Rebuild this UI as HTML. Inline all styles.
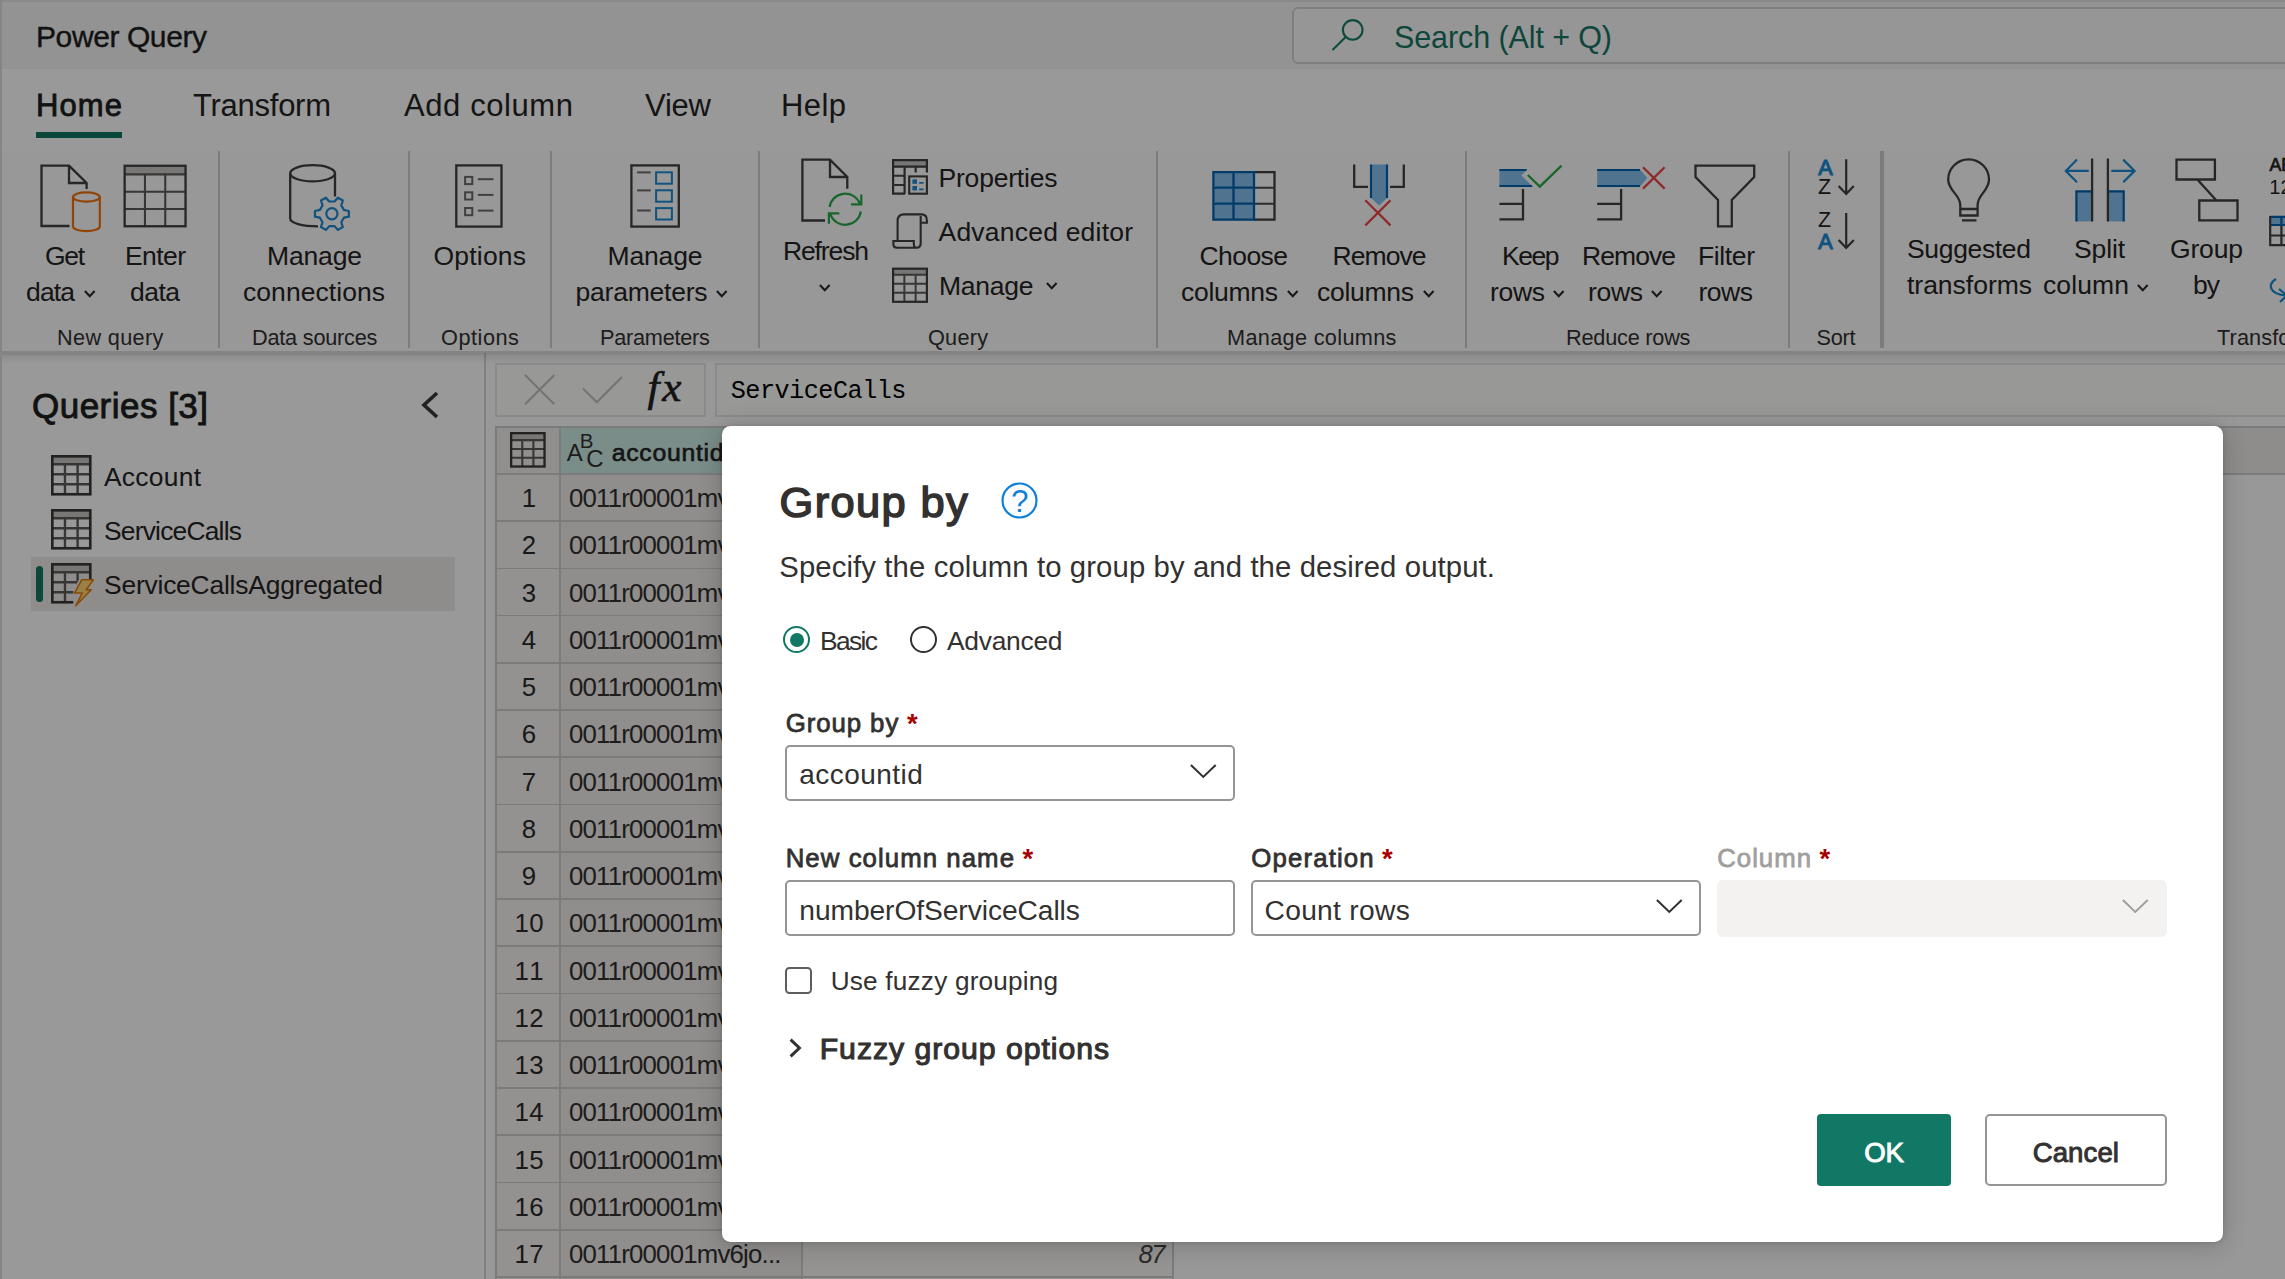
<!DOCTYPE html>
<html lang="en"><head><meta charset="utf-8"><title>Power Query - Group by</title>
<style>
html,body{margin:0;padding:0;}
body{width:2285px;height:1279px;overflow:hidden;position:relative;background:#fff;font-family:"Liberation Sans",sans-serif;color:#252423;}
.t{position:absolute;white-space:nowrap;line-height:1;display:block;}
.r{position:absolute;box-sizing:border-box;display:block;}
#app,#overlay{position:absolute;left:0;top:0;width:2285px;height:1279px;overflow:hidden;}
#overlay{background:rgba(0,0,0,0.4);}
#dlg{position:absolute;left:722px;top:426px;width:1501px;height:816px;background:#fff;border-radius:8.5px;box-shadow:0 3px 26px rgba(0,0,0,0.2),0 0 5px rgba(0,0,0,0.14);}
</style></head><body>

<div id="app">
<div class="r " style="left:0.0px;top:0.0px;width:2285.0px;height:69.0px;background:#f5f5f5;"></div>
<span class="t" style="letter-spacing:-0.405px;left:36.0px;top:21.65px;font-size:30.0px;color:#201f1e;-webkit-text-stroke:0.4px #201f1e;">Power Query</span>
<div class="r " style="left:1292.0px;top:6.5px;width:1108.0px;height:57.0px;background:#fbfbfb;border:2px solid #d4d4d4;border-radius:6px;"></div>
<svg class="r" style="left:1330.0px;top:17.0px;" width="38" height="38" viewBox="0 0 38 38" fill="none"><circle cx="22.7" cy="12.9" r="9.8" stroke="#1a7c69" stroke-width="2.1"/><path d="M15.6 20 L3 32.4" stroke="#1a7c69" stroke-width="2.1" stroke-linecap="round"/></svg>
<span class="t" style="letter-spacing:-0.100px;left:1394.0px;top:21.90px;font-size:30.5px;color:#167563;">Search (Alt + Q)</span>
<div class="r " style="left:0.0px;top:0.0px;width:2285.0px;height:1.5px;background:#e4e4e4;"></div>
<div class="r " style="left:0.0px;top:69.0px;width:2285.0px;height:81.0px;background:#ffffff;"></div>
<span class="t" style="letter-spacing:1.104px;left:36.0px;top:90.15px;font-size:31.0px;color:#201f1e;-webkit-text-stroke:0.81px;">Home</span>
<div class="r " style="left:36.0px;top:132.0px;width:86.0px;height:6.0px;background:#117865;"></div>
<span class="t" style="letter-spacing:-0.260px;left:193.0px;top:90.15px;font-size:31.0px;">Transform</span>
<span class="t" style="letter-spacing:0.589px;left:404.0px;top:90.15px;font-size:31.0px;">Add column</span>
<span class="t" style="letter-spacing:-0.210px;left:645.0px;top:90.15px;font-size:31.0px;">View</span>
<span class="t" style="letter-spacing:0.416px;left:781.0px;top:90.15px;font-size:31.0px;">Help</span>
<div class="r " style="left:0.0px;top:150.0px;width:2285.0px;height:202.0px;background:#fdfdfd;"></div>
<div class="r " style="left:217.8px;top:151.0px;width:2.4px;height:197.0px;background:#cfcfcf;"></div>
<div class="r " style="left:407.8px;top:151.0px;width:2.4px;height:197.0px;background:#cfcfcf;"></div>
<div class="r " style="left:549.8px;top:151.0px;width:2.4px;height:197.0px;background:#cfcfcf;"></div>
<div class="r " style="left:757.8px;top:151.0px;width:2.4px;height:197.0px;background:#cfcfcf;"></div>
<div class="r " style="left:1155.8px;top:151.0px;width:2.4px;height:197.0px;background:#cfcfcf;"></div>
<div class="r " style="left:1464.8px;top:151.0px;width:2.4px;height:197.0px;background:#cfcfcf;"></div>
<div class="r " style="left:1787.8px;top:151.0px;width:2.4px;height:197.0px;background:#cfcfcf;"></div>
<div class="r " style="left:1880.3px;top:151.0px;width:3.4px;height:197.0px;background:#cfcfcf;"></div>
<span class="t" style="letter-spacing:-1.355px;left:45.0px;top:242.90px;font-size:26.5px;">Get</span>
<span class="t" style="letter-spacing:-0.857px;left:26.0px;top:278.90px;font-size:26.5px;">data</span>
<svg class="r" style="left:84.3px;top:290.3px;" width="13" height="9" viewBox="0 0 13 9" fill="none"><path d="M0.9 1 L5.75 6.2 L10.6 1" stroke="#2b2a29" stroke-width="2.1"/></svg>
<span class="t" style="letter-spacing:-0.584px;left:125.0px;top:242.90px;font-size:26.5px;">Enter</span>
<span class="t" style="letter-spacing:-0.524px;left:130.0px;top:278.90px;font-size:26.5px;">data</span>
<span class="t" style="letter-spacing:-0.151px;left:267.0px;top:242.90px;font-size:26.5px;">Manage</span>
<span class="t" style="letter-spacing:0.058px;left:243.0px;top:278.90px;font-size:26.5px;">connections</span>
<span class="t" style="letter-spacing:0.196px;left:433.5px;top:242.90px;font-size:26.5px;">Options</span>
<span class="t" style="letter-spacing:-0.151px;left:607.5px;top:242.90px;font-size:26.5px;">Manage</span>
<span class="t" style="letter-spacing:-0.224px;left:575.5px;top:278.90px;font-size:26.5px;">parameters</span>
<svg class="r" style="left:715.6px;top:290.3px;" width="13" height="9" viewBox="0 0 13 9" fill="none"><path d="M0.9 1 L5.75 6.2 L10.6 1" stroke="#2b2a29" stroke-width="2.1"/></svg>
<span class="t" style="letter-spacing:-1.131px;left:783.0px;top:237.90px;font-size:26.5px;">Refresh</span>
<svg class="r" style="left:819.0px;top:284.3px;" width="13" height="9" viewBox="0 0 13 9" fill="none"><path d="M0.9 1 L5.75 6.2 L10.6 1" stroke="#2b2a29" stroke-width="2.1"/></svg>
<span class="t" style="letter-spacing:-0.197px;left:938.5px;top:164.90px;font-size:26.5px;">Properties</span>
<span class="t" style="letter-spacing:0.214px;left:938.5px;top:218.90px;font-size:26.5px;">Advanced editor</span>
<span class="t" style="letter-spacing:-0.251px;left:939.0px;top:272.90px;font-size:26.5px;">Manage</span>
<svg class="r" style="left:1045.5px;top:282.3px;" width="13" height="9" viewBox="0 0 13 9" fill="none"><path d="M0.9 1 L5.75 6.2 L10.6 1" stroke="#2b2a29" stroke-width="2.1"/></svg>
<span class="t" style="letter-spacing:-0.567px;left:1199.5px;top:242.90px;font-size:26.5px;">Choose</span>
<span class="t" style="letter-spacing:-0.279px;left:1181.0px;top:278.90px;font-size:26.5px;">columns</span>
<svg class="r" style="left:1286.5px;top:290.3px;" width="13" height="9" viewBox="0 0 13 9" fill="none"><path d="M0.9 1 L5.75 6.2 L10.6 1" stroke="#2b2a29" stroke-width="2.1"/></svg>
<span class="t" style="letter-spacing:-0.934px;left:1332.5px;top:242.90px;font-size:26.5px;">Remove</span>
<span class="t" style="letter-spacing:-0.279px;left:1317.0px;top:278.90px;font-size:26.5px;">columns</span>
<svg class="r" style="left:1422.5px;top:290.3px;" width="13" height="9" viewBox="0 0 13 9" fill="none"><path d="M0.9 1 L5.75 6.2 L10.6 1" stroke="#2b2a29" stroke-width="2.1"/></svg>
<span class="t" style="letter-spacing:-1.462px;left:1502.0px;top:242.90px;font-size:26.5px;">Keep</span>
<span class="t" style="letter-spacing:-0.316px;left:1490.0px;top:278.90px;font-size:26.5px;">rows</span>
<svg class="r" style="left:1552.5px;top:290.3px;" width="13" height="9" viewBox="0 0 13 9" fill="none"><path d="M0.9 1 L5.75 6.2 L10.6 1" stroke="#2b2a29" stroke-width="2.1"/></svg>
<span class="t" style="letter-spacing:-0.934px;left:1582.0px;top:242.90px;font-size:26.5px;">Remove</span>
<span class="t" style="letter-spacing:-0.316px;left:1588.0px;top:278.90px;font-size:26.5px;">rows</span>
<svg class="r" style="left:1651.0px;top:290.3px;" width="13" height="9" viewBox="0 0 13 9" fill="none"><path d="M0.9 1 L5.75 6.2 L10.6 1" stroke="#2b2a29" stroke-width="2.1"/></svg>
<span class="t" style="letter-spacing:-0.377px;left:1698.0px;top:242.90px;font-size:26.5px;">Filter</span>
<span class="t" style="letter-spacing:-0.483px;left:1698.5px;top:278.90px;font-size:26.5px;">rows</span>
<span class="t" style="letter-spacing:-0.338px;left:1907.0px;top:235.90px;font-size:26.5px;">Suggested</span>
<span class="t" style="letter-spacing:-0.017px;left:1907.0px;top:271.90px;font-size:26.5px;">transforms</span>
<span class="t" style="letter-spacing:-0.138px;left:2074.0px;top:235.90px;font-size:26.5px;">Split</span>
<span class="t" style="letter-spacing:0.116px;left:2043.0px;top:271.90px;font-size:26.5px;">column</span>
<svg class="r" style="left:2137.2px;top:284.3px;" width="13" height="9" viewBox="0 0 13 9" fill="none"><path d="M0.9 1 L5.75 6.2 L10.6 1" stroke="#2b2a29" stroke-width="2.1"/></svg>
<span class="t" style="letter-spacing:-0.161px;left:2170.0px;top:235.90px;font-size:26.5px;">Group</span>
<span class="t" style="letter-spacing:-0.986px;left:2193.0px;top:271.90px;font-size:26.5px;">by</span>
<span class="t" style="letter-spacing:0.348px;left:57.0px;top:326.80px;font-size:21.7px;color:#323130;">New query</span>
<span class="t" style="letter-spacing:-0.213px;left:252.0px;top:326.80px;font-size:21.7px;color:#323130;">Data sources</span>
<span class="t" style="letter-spacing:0.537px;left:441.0px;top:326.80px;font-size:21.7px;color:#323130;">Options</span>
<span class="t" style="letter-spacing:-0.239px;left:600.0px;top:326.80px;font-size:21.7px;color:#323130;">Parameters</span>
<span class="t" style="letter-spacing:0.228px;left:928.0px;top:326.80px;font-size:21.7px;color:#323130;">Query</span>
<span class="t" style="letter-spacing:0.328px;left:1227.0px;top:326.80px;font-size:21.7px;color:#323130;">Manage columns</span>
<span class="t" style="letter-spacing:-0.213px;left:1566.0px;top:326.80px;font-size:21.7px;color:#323130;">Reduce rows</span>
<span class="t" style="letter-spacing:-0.265px;left:1816.5px;top:326.80px;font-size:21.7px;color:#323130;">Sort</span>
<span class="t" style="letter-spacing:0.118px;left:2217.0px;top:326.80px;font-size:21.7px;color:#323130;">Transform</span>
<svg class="r" style="left:0.0px;top:0.0px;overflow:hidden;" width="2285" height="360" viewBox="0 0 2285 360" fill="none"><path d="M69.5 226 H41.5 V165.7 H69 L86.6 183 V189 M69 165.7 V183 H86.6" stroke="#404040" stroke-width="2.30" />
<path d="M73 197 V226.5 A13.4 4.6 0 0 0 99.8 226.5 V197" stroke="#f4720a" stroke-width="2.20" />
<ellipse cx="86.4" cy="197" rx="13.4" ry="4.7" stroke="#f4720a" stroke-width="2.2"/>
<rect x="124.65" y="165.75" width="60.90" height="8.65" fill="#c8c6c4"/><path d="M124.65 174.40 H185.55 M124.65 191.68 H185.55 M124.65 208.97 H185.55 M144.95 174.40 V226.25 M165.25 174.40 V226.25 " stroke="#5c5a58" stroke-width="2.07"/><rect x="124.65" y="165.75" width="60.90" height="60.50" stroke="#404040" stroke-width="2.30"/>
<path d="M290.2 173.3 V218.5 C290.2 223 302 226.3 318 226.3 M335 173.3 V196.5" stroke="#404040" stroke-width="2.30" />
<ellipse cx="312.6" cy="173.3" rx="22.4" ry="8.1" stroke="#404040" stroke-width="2.30"/>
<path d="M343.88 209.91 L348.86 210.96 L348.86 216.64 L343.88 217.69 L341.26 222.23 L342.84 227.07 L337.92 229.91 L334.52 226.12 L329.28 226.12 L325.88 229.91 L320.96 227.07 L322.54 222.23 L319.92 217.69 L314.94 216.64 L314.94 210.96 L319.92 209.91 L322.54 205.37 L320.96 200.53 L325.88 197.69 L329.28 201.48 L334.52 201.48 L337.92 197.69 L342.84 200.53 L341.26 205.37 Z" stroke="#1b8ad3" stroke-width="2.20" stroke-linejoin="round"/>
<circle cx="331.9" cy="213.8" r="5.6" stroke="#1b8ad3" stroke-width="2.2"/>
<rect x="456.3" y="165.4" width="45.2" height="61.2" stroke="#404040" stroke-width="2.30"/>
<rect x="465.1" y="176.9" width="7.2" height="7.2" stroke="#6e6c6a" stroke-width="2"/>
<path d="M477.8 179.2 H493.5" stroke="#6e6c6a" stroke-width="2.00" />
<rect x="465.1" y="192.3" width="7.2" height="7.2" stroke="#6e6c6a" stroke-width="2"/>
<path d="M477.8 194.9 H493.5" stroke="#6e6c6a" stroke-width="2.00" />
<rect x="465.1" y="208.0" width="7.2" height="7.2" stroke="#6e6c6a" stroke-width="2"/>
<path d="M477.8 210.6 H493.5" stroke="#6e6c6a" stroke-width="2.00" />
<rect x="631.4" y="165.4" width="47.4" height="61.2" stroke="#404040" stroke-width="2.30"/>
<path d="M637.1 172.4 H650.7" stroke="#6e6c6a" stroke-width="2.00" />
<rect x="656.1" y="172.3" width="15.8" height="11.4" stroke="#1b8ad3" stroke-width="2"/>
<path d="M637.1 190.4 H650.7" stroke="#6e6c6a" stroke-width="2.00" />
<rect x="656.1" y="190.3" width="15.8" height="11.4" stroke="#1b8ad3" stroke-width="2"/>
<path d="M637.1 210.5 H650.7" stroke="#6e6c6a" stroke-width="2.00" />
<rect x="656.1" y="208.1" width="15.8" height="11.4" stroke="#1b8ad3" stroke-width="2"/>
<path d="M825 220.5 H802.4 V159.6 H830 L847.3 177 V188.8 M830 159.6 V177 H847.3" stroke="#404040" stroke-width="2.30" />
<path d="M829.6 207 A15.7 15.3 0 0 1 859.8 203.5 M861.3 194.4 V204.4 H851 M860.8 211.5 A15.7 15.3 0 0 1 830.4 214.5 M828.9 223.8 V213.3 H839.4" stroke="#2bab4a" stroke-width="2.20" />
<rect x="893" y="160" width="34" height="6.3" fill="#c8c6c4"/>
<path d="M905 193.7 H893.1 V160.1 H926.9 V172.5 M893.1 166.6 H926.9 M904.6 166.6 V193.7 M915.7 166.6 V172.5" stroke="#404040" stroke-width="2.20" />
<path d="M893.1 175.8 H904.6 M893.1 185 H904.6" stroke="#4a4846" stroke-width="2.00" />
<rect x="909.2" y="176.4" width="17.7" height="17.3" stroke="#404040" stroke-width="2.1"/>
<rect x="912.4" y="179.4" width="4.6" height="4.4" fill="#1b8ad3"/><rect x="912.4" y="186" width="4.6" height="4.4" fill="#1b8ad3"/>
<path d="M919.2 182.8 H923.6 M919.2 189.4 H923.6" stroke="#1b8ad3" stroke-width="1.70" />
<path d="M897.6 241 V221 Q897.6 214.4 904 214.4 H921.5 Q926.9 214.4 926.9 220.5 V222.7 H920.7 M920.7 216 V243 Q920.7 247.7 916.5 247.7 Q913.8 247.7 913.8 244 V241 H893.4 V244.5 Q893.4 247.7 897 247.7 H916.5" stroke="#404040" stroke-width="2.10" />
<rect x="893.10" y="268.70" width="33.80" height="6.10" fill="#c8c6c4"/><path d="M893.10 274.80 H926.90 M893.10 283.80 H926.90 M893.10 292.80 H926.90 M904.37 274.80 V301.80 M915.63 274.80 V301.80 " stroke="#5c5a58" stroke-width="1.98"/><rect x="893.10" y="268.70" width="33.80" height="33.10" stroke="#404040" stroke-width="2.20"/>
<rect x="1213.4" y="172.1" width="40.6" height="47.6" fill="#86c0f0"/>
<path d="M1254 172.1 H1274.5 V219.7 H1254" stroke="#404040" stroke-width="2.30" />
<path d="M1254 187.7 H1274.5 M1254 203.7 H1274.5" stroke="#4a4846" stroke-width="2.00" />
<path d="M1213.4 172.1 H1254 V219.7 H1213.4 Z M1233.5 172.1 V219.7 M1213.4 187.7 H1254 M1213.4 203.7 H1254" stroke="#0063b1" stroke-width="2.30" />
<path d="M1354.2 164.4 V186.9 H1368 M1390 186.9 H1403.8 V164.4" stroke="#404040" stroke-width="2.30" />
<path d="M1371 164.4 H1387 V198 L1379 205.5 L1371 198 Z" fill="#86c0f0"/>
<path d="M1371 164.4 V198 M1387 164.4 V198" stroke="#0063b1" stroke-width="2.20" />
<path d="M1365.3 200.2 L1390.5 225.4 M1390.5 200.2 L1365.3 225.4" stroke="#f04545" stroke-width="2.20" />
<path d="M1499.4 169 H1527.3 L1521.5 175.5 L1533.2 187 H1499.4 Z" fill="#86c0f0"/>
<path d="M1499.4 170 H1526.5 M1499.4 186 H1532" stroke="#0063b1" stroke-width="2.20" />
<path d="M1527.8 175 L1539.8 186.6 L1561.5 165.6" stroke="#2bab4a" stroke-width="2.30" />
<path d="M1523 189 V219.3 H1499.4 M1499.4 203.8 H1523" stroke="#404040" stroke-width="2.30" />
<path d="M1597.2 169 H1639.5 L1647.4 178 L1639.5 187 H1597.2 Z" fill="#86c0f0"/>
<path d="M1597.2 170 H1640 M1597.2 186 H1640" stroke="#0063b1" stroke-width="2.20" />
<path d="M1643 167.2 L1664.6 188.6 M1664.6 167.2 L1643 188.6" stroke="#f04545" stroke-width="2.30" />
<path d="M1621.1 189 V219.3 H1597.2 M1597.2 203.8 H1621.1" stroke="#404040" stroke-width="2.30" />
<path d="M1695.5 165.6 H1754.2 V177 L1731.8 199.9 V226.3 H1718 V199.9 L1695.5 177 Z" stroke="#404040" stroke-width="2.30" />
<path d="M1846.2 159.2 V193.6 M1838.6 186 L1846.2 193.9 L1853.8 186" stroke="#404040" stroke-width="2.20" />
<path d="M1846.2 213 V247.6 M1838.6 240 L1846.2 247.9 L1853.8 240" stroke="#404040" stroke-width="2.20" />
<path d="M1960.3 215.5 V205 C1960.3 194.5 1948.2 191 1948.2 179.5 A20.4 20.2 0 0 1 1989 179.5 C1989 191 1977.6 194.5 1977.6 205 V215.5 Z M1960.3 209 H1977.6 M1962 220.3 H1976.5" stroke="#404040" stroke-width="2.30" />
<rect x="2076.4" y="191.4" width="15.7" height="30" fill="#86c0f0"/><rect x="2107.9" y="191.4" width="15.8" height="30" fill="#86c0f0"/>
<path d="M2076.4 221.4 V191.4 H2092 M2107.9 191.4 H2123.7 V221.4" stroke="#0063b1" stroke-width="2.20" />
<path d="M2092.1 158.5 V221.4 M2107.9 158.5 V221.4" stroke="#404040" stroke-width="2.30" />
<path d="M2088.8 170.9 H2066 M2077 159.6 L2065.8 170.9 L2077 182.2 M2111.3 170.9 H2134.6 M2123.2 159.6 L2134.6 170.9 L2123.2 182.2" stroke="#1b8ad3" stroke-width="2.20" />
<path d="M2176.5 159.6 H2214.9 V179.5 H2176.5 Z M2199.3 200.5 H2237.5 V220.4 H2199.3 Z M2197.8 180 L2216 200" stroke="#404040" stroke-width="2.30" />
<rect x="2270" y="216.8" width="20" height="8" fill="#86c0f0"/>
<path d="M2270.2 216.8 H2290 M2270.2 225 H2290 M2281.4 216.8 V225" stroke="#0063b1" stroke-width="2.20" />
<path d="M2270.2 216 V245.2 H2290 M2270.2 235.5 H2290 M2281.4 226 V245" stroke="#404040" stroke-width="2.20" />
<path d="M2276 279 C2268 284 2268 294 2287 295.5 M2279 289 L2287 295.5 L2280 302" stroke="#1b8ad3" stroke-width="2.20" /></svg>
<span class="t" style="left:1818.3px;top:156.80px;font-size:21.7px;color:#1b8ad3;-webkit-text-stroke:1.08px;">A</span>
<span class="t" style="left:1817.9px;top:177.45px;font-size:21.4px;color:#252423;">Z</span>
<span class="t" style="left:1817.9px;top:210.45px;font-size:21.4px;color:#252423;">Z</span>
<span class="t" style="left:1818.3px;top:230.80px;font-size:21.7px;color:#1b8ad3;-webkit-text-stroke:1.08px;">A</span>
<span class="t" style="left:2269.5px;top:157.25px;font-size:17.8px;color:#252423;-webkit-text-stroke:0.71px;">AB</span>
<span class="t" style="left:2269.3px;top:177.15px;font-size:20.0px;color:#252423;">12</span>
<div class="r " style="left:0.0px;top:352.0px;width:485.0px;height:927.0px;background:#ffffff;"></div>
<div class="r " style="left:484.0px;top:352.0px;width:2.2px;height:927.0px;background:#d6d6d6;"></div>
<span class="t" style="letter-spacing:0.482px;left:32.0px;top:388.15px;font-size:35.0px;color:#201f1e;-webkit-text-stroke:0.91px;">Queries [3]</span>
<svg class="r" style="left:419.3px;top:389.4px;" width="24" height="32" viewBox="0 0 24 32" fill="none"><path d="M18 4 L5 16 L18 28" stroke="#3b3a39" stroke-width="3.7" /></svg>
<div class="r " style="left:31.0px;top:557.0px;width:424.0px;height:53.5px;background:#edebe9;"></div>
<div class="r " style="left:36.0px;top:566.0px;width:7.0px;height:36.0px;background:#117865;border-radius:3.5px;"></div>
<span class="t" style="letter-spacing:0.269px;left:104.0px;top:463.95px;font-size:26.4px;">Account</span>
<span class="t" style="letter-spacing:-0.791px;left:104.0px;top:517.95px;font-size:26.4px;">ServiceCalls</span>
<span class="t" style="letter-spacing:-0.200px;left:104.0px;top:571.95px;font-size:26.4px;">ServiceCallsAggregated</span>
<svg class="r" style="left:51.2px;top:455.2px;overflow:visible;" width="40.6" height="40.6" viewBox="0 0 40 40" fill="none"><rect x="1.30" y="1.30" width="37.40" height="7.80" fill="#c8c6c4"/><path d="M1.30 9.10 H38.70 M1.30 18.97 H38.70 M1.30 28.83 H38.70 M13.77 9.10 V38.70 M26.23 9.10 V38.70 " stroke="#5c5a58" stroke-width="2.34"/><rect x="1.30" y="1.30" width="37.40" height="37.40" stroke="#3b3a39" stroke-width="2.60"/></svg>
<svg class="r" style="left:51.2px;top:509.2px;overflow:visible;" width="40.6" height="40.6" viewBox="0 0 40 40" fill="none"><rect x="1.30" y="1.30" width="37.40" height="7.80" fill="#c8c6c4"/><path d="M1.30 9.10 H38.70 M1.30 18.97 H38.70 M1.30 28.83 H38.70 M13.77 9.10 V38.70 M26.23 9.10 V38.70 " stroke="#5c5a58" stroke-width="2.34"/><rect x="1.30" y="1.30" width="37.40" height="37.40" stroke="#3b3a39" stroke-width="2.60"/></svg>
<svg class="r" style="left:51.2px;top:563.2px;overflow:visible;" width="40.6" height="40.6" viewBox="0 0 40 40" fill="none"><rect x="1.30" y="1.30" width="37.40" height="7.80" fill="#c8c6c4"/><path d="M1.30 9.10 H38.70 M1.30 18.97 H38.70 M1.30 28.83 H38.70 M13.77 9.10 V38.70 M26.23 9.10 V38.70 " stroke="#5c5a58" stroke-width="2.34"/><rect x="1.30" y="1.30" width="37.40" height="37.40" stroke="#3b3a39" stroke-width="2.60"/><path d="M22 41 V27 L27 17 H41 V41 Z" fill="#edebe9"/><path d="M30.2 16.6 H41.8 L34.6 26.3 H39.6 L24.4 42.2 L30.8 29.6 H23.2 Z" fill="#ffd873" stroke="#e57a0a" stroke-width="1.5" stroke-linejoin="round"/></svg>
<div class="r " style="left:486.0px;top:352.0px;width:1799.0px;height:927.0px;background:#fefefe;"></div>
<div class="r " style="left:0.0px;top:352.0px;width:2285.0px;height:12.0px;background:linear-gradient(rgba(0,0,0,0.2),rgba(0,0,0,0.07) 35%,rgba(0,0,0,0));"></div>
<div class="r " style="left:0.0px;top:351.3px;width:2285.0px;height:1.7px;background:#dcdcdc;"></div>
<div class="r " style="left:495.2px;top:363.3px;width:210.5px;height:53.3px;background:#fdfdfc;border:2px solid #e6e6e6;"></div>
<div class="r " style="left:714.9px;top:363.3px;width:1685.1px;height:53.3px;background:#fdfdfc;border:2px solid #e6e6e6;"></div>
<svg class="r" style="left:522.0px;top:372.0px;" width="36" height="36" viewBox="0 0 36 36" fill="none"><path d="M3 3 L32.3 32.3 M32.3 3 L3 32.3" stroke="#c4c2c0" stroke-width="2.1"/></svg>
<svg class="r" style="left:580.0px;top:373.0px;" width="46" height="34" viewBox="0 0 46 34" fill="none"><path d="M3 15.5 L16.8 29.3 L42 4" stroke="#c4c2c0" stroke-width="2.1"/></svg>
<span class="t" style="letter-spacing:2.822px;left:647.5px;top:365.05px;font-size:43.2px;font-style:italic;color:#201f1e;font-family:'Liberation Serif',serif;-webkit-text-stroke:0.60px;">fx</span>
<span class="t" style="letter-spacing:-0.508px;left:730.7px;top:379.05px;font-size:25.2px;color:#000;font-family:'Liberation Mono',monospace;">ServiceCalls</span>
<div class="r " style="left:496.0px;top:427.0px;width:677.0px;height:852.0px;background:#f5f3f1;"></div>
<div class="r " style="left:561.0px;top:473.9px;width:241.0px;height:805.1px;background:#efedeb;"></div>
<div class="r " style="left:802.0px;top:473.9px;width:371.0px;height:805.1px;background:#f8f7f6;"></div>
<div class="r " style="left:1173.0px;top:427.0px;width:1112.0px;height:46.9px;background:#eeecea;"></div>
<div class="r " style="left:496.0px;top:427.0px;width:65.0px;height:46.9px;background:#f0eeec;"></div>
<div class="r " style="left:561.0px;top:427.0px;width:241.0px;height:46.9px;background:#cbece5;"></div>
<div class="r " style="left:495.2px;top:426.0px;width:2.0px;height:853.0px;background:#cecece;"></div>
<div class="r " style="left:559.4px;top:426.0px;width:2.0px;height:853.0px;background:#cecece;"></div>
<div class="r " style="left:801.0px;top:426.0px;width:2.0px;height:853.0px;background:#cecece;"></div>
<div class="r " style="left:1172.0px;top:426.0px;width:2.0px;height:853.0px;background:#cecece;"></div>
<div class="r " style="left:495.3px;top:426.1px;width:1789.7px;height:1.8px;background:#cecece;"></div>
<div class="r " style="left:495.3px;top:473.0px;width:1789.7px;height:1.8px;background:#cecece;"></div>
<div class="r " style="left:495.3px;top:520.2px;width:678.6px;height:1.8px;background:#cecece;"></div>
<div class="r " style="left:495.3px;top:567.5px;width:678.6px;height:1.8px;background:#cecece;"></div>
<div class="r " style="left:495.3px;top:614.7px;width:678.6px;height:1.8px;background:#cecece;"></div>
<div class="r " style="left:495.3px;top:662.0px;width:678.6px;height:1.8px;background:#cecece;"></div>
<div class="r " style="left:495.3px;top:709.2px;width:678.6px;height:1.8px;background:#cecece;"></div>
<div class="r " style="left:495.3px;top:756.4px;width:678.6px;height:1.8px;background:#cecece;"></div>
<div class="r " style="left:495.3px;top:803.7px;width:678.6px;height:1.8px;background:#cecece;"></div>
<div class="r " style="left:495.3px;top:850.9px;width:678.6px;height:1.8px;background:#cecece;"></div>
<div class="r " style="left:495.3px;top:898.2px;width:678.6px;height:1.8px;background:#cecece;"></div>
<div class="r " style="left:495.3px;top:945.4px;width:678.6px;height:1.8px;background:#cecece;"></div>
<div class="r " style="left:495.3px;top:992.6px;width:678.6px;height:1.8px;background:#cecece;"></div>
<div class="r " style="left:495.3px;top:1039.9px;width:678.6px;height:1.8px;background:#cecece;"></div>
<div class="r " style="left:495.3px;top:1087.1px;width:678.6px;height:1.8px;background:#cecece;"></div>
<div class="r " style="left:495.3px;top:1134.4px;width:678.6px;height:1.8px;background:#cecece;"></div>
<div class="r " style="left:495.3px;top:1181.6px;width:678.6px;height:1.8px;background:#cecece;"></div>
<div class="r " style="left:495.3px;top:1228.8px;width:678.6px;height:1.8px;background:#cecece;"></div>
<div class="r " style="left:495.3px;top:1276.1px;width:678.6px;height:1.8px;background:#cecece;"></div>
<svg class="r" style="left:510.2px;top:432.1px;overflow:visible;" width="35.7" height="35.7" viewBox="0 0 40 40" fill="none"><rect x="1.30" y="1.30" width="37.40" height="7.80" fill="#c8c6c4"/><path d="M1.30 9.10 H38.70 M1.30 18.97 H38.70 M1.30 28.83 H38.70 M13.77 9.10 V38.70 M26.23 9.10 V38.70 " stroke="#5c5a58" stroke-width="2.34"/><rect x="1.30" y="1.30" width="37.40" height="37.40" stroke="#3b3a39" stroke-width="2.60"/></svg>
<span class="t" style="left:566.8px;top:440.65px;font-size:24.0px;color:#323130;">A</span>
<span class="t" style="left:579.7px;top:431.40px;font-size:20.5px;color:#323130;">B</span>
<span class="t" style="left:586.2px;top:446.65px;font-size:24.0px;color:#323130;">C</span>
<span class="t" style="letter-spacing:0.693px;left:611.8px;top:441.25px;font-size:24.8px;-webkit-text-stroke:0.64px;">accountid</span>
<span class="t" style="left:521.7px;top:486.25px;font-size:25.8px;color:#2b2a29;">1</span>
<span class="t" style="letter-spacing:-0.795px;left:568.9px;top:486.25px;font-size:25.8px;color:#323130;">0011r00001mv6jo...</span>
<span class="t" style="left:521.7px;top:533.25px;font-size:25.8px;color:#2b2a29;">2</span>
<span class="t" style="letter-spacing:-0.795px;left:568.9px;top:533.25px;font-size:25.8px;color:#323130;">0011r00001mv6jo...</span>
<span class="t" style="left:521.7px;top:581.25px;font-size:25.8px;color:#2b2a29;">3</span>
<span class="t" style="letter-spacing:-0.795px;left:568.9px;top:581.25px;font-size:25.8px;color:#323130;">0011r00001mv6jo...</span>
<span class="t" style="left:521.7px;top:628.25px;font-size:25.8px;color:#2b2a29;">4</span>
<span class="t" style="letter-spacing:-0.795px;left:568.9px;top:628.25px;font-size:25.8px;color:#323130;">0011r00001mv6jo...</span>
<span class="t" style="left:521.7px;top:675.25px;font-size:25.8px;color:#2b2a29;">5</span>
<span class="t" style="letter-spacing:-0.795px;left:568.9px;top:675.25px;font-size:25.8px;color:#323130;">0011r00001mv6jo...</span>
<span class="t" style="left:521.7px;top:722.25px;font-size:25.8px;color:#2b2a29;">6</span>
<span class="t" style="letter-spacing:-0.795px;left:568.9px;top:722.25px;font-size:25.8px;color:#323130;">0011r00001mv6jo...</span>
<span class="t" style="left:521.7px;top:770.25px;font-size:25.8px;color:#2b2a29;">7</span>
<span class="t" style="letter-spacing:-0.795px;left:568.9px;top:770.25px;font-size:25.8px;color:#323130;">0011r00001mv6jo...</span>
<span class="t" style="left:521.7px;top:817.25px;font-size:25.8px;color:#2b2a29;">8</span>
<span class="t" style="letter-spacing:-0.795px;left:568.9px;top:817.25px;font-size:25.8px;color:#323130;">0011r00001mv6jo...</span>
<span class="t" style="left:521.7px;top:864.25px;font-size:25.8px;color:#2b2a29;">9</span>
<span class="t" style="letter-spacing:-0.795px;left:568.9px;top:864.25px;font-size:25.8px;color:#323130;">0011r00001mv6jo...</span>
<span class="t" style="letter-spacing:0.506px;left:514.4px;top:911.25px;font-size:25.8px;color:#2b2a29;">10</span>
<span class="t" style="letter-spacing:-0.795px;left:568.9px;top:911.25px;font-size:25.8px;color:#323130;">0011r00001mv6jo...</span>
<span class="t" style="letter-spacing:2.420px;left:514.4px;top:959.25px;font-size:25.8px;color:#2b2a29;">11</span>
<span class="t" style="letter-spacing:-0.795px;left:568.9px;top:959.25px;font-size:25.8px;color:#323130;">0011r00001mv6jo...</span>
<span class="t" style="letter-spacing:0.506px;left:514.4px;top:1006.25px;font-size:25.8px;color:#2b2a29;">12</span>
<span class="t" style="letter-spacing:-0.795px;left:568.9px;top:1006.25px;font-size:25.8px;color:#323130;">0011r00001mv6jo...</span>
<span class="t" style="letter-spacing:0.506px;left:514.4px;top:1053.25px;font-size:25.8px;color:#2b2a29;">13</span>
<span class="t" style="letter-spacing:-0.795px;left:568.9px;top:1053.25px;font-size:25.8px;color:#323130;">0011r00001mv6jo...</span>
<span class="t" style="letter-spacing:0.506px;left:514.4px;top:1100.25px;font-size:25.8px;color:#2b2a29;">14</span>
<span class="t" style="letter-spacing:-0.795px;left:568.9px;top:1100.25px;font-size:25.8px;color:#323130;">0011r00001mv6jo...</span>
<span class="t" style="letter-spacing:0.506px;left:514.4px;top:1148.25px;font-size:25.8px;color:#2b2a29;">15</span>
<span class="t" style="letter-spacing:-0.795px;left:568.9px;top:1148.25px;font-size:25.8px;color:#323130;">0011r00001mv6jo...</span>
<span class="t" style="letter-spacing:0.506px;left:514.4px;top:1195.25px;font-size:25.8px;color:#2b2a29;">16</span>
<span class="t" style="letter-spacing:-0.795px;left:568.9px;top:1195.25px;font-size:25.8px;color:#323130;">0011r00001mv6jo...</span>
<span class="t" style="letter-spacing:0.506px;left:514.4px;top:1242.25px;font-size:25.8px;color:#2b2a29;">17</span>
<span class="t" style="letter-spacing:-0.795px;left:568.9px;top:1242.25px;font-size:25.8px;color:#323130;">0011r00001mv6jo...</span>
<span class="t" style="letter-spacing:-1.361px;left:1138.5px;top:1242.40px;font-size:25.5px;font-style:italic;color:#484644;">87</span>
<div class="r " style="left:0.0px;top:0.0px;width:2.0px;height:1279.0px;background:#dedede;"></div>
</div>
<div id="overlay"></div>

<div id="dlg"></div>
<span class="t" style="letter-spacing:1.385px;left:779.6px;top:481.45px;font-size:43.4px;color:#323130;-webkit-text-stroke:1.56px;">Group by</span>
<svg class="r" style="left:1001.0px;top:481.5px;" width="37" height="37" viewBox="0 0 37 37" fill="none"><circle cx="18.5" cy="18.5" r="17" stroke="#0f7fd6" stroke-width="2.2" fill="#fafcfe"/></svg>
<span class="t" style="left:1011.2px;top:486.15px;font-size:31.0px;color:#0f7fd6;">?</span>
<span class="t" style="letter-spacing:0.105px;left:779.3px;top:552.00px;font-size:29.3px;color:#323130;">Specify the column to group by and the desired output.</span>
<div class="r " style="left:783.0px;top:626.0px;width:27.0px;height:27.0px;background:#fff;border:2px solid #117865;border-radius:50%;"></div>
<div class="r " style="left:789.5px;top:632.5px;width:14.0px;height:14.0px;background:#117865;border-radius:50%;"></div>
<span class="t" style="letter-spacing:-1.639px;left:820.0px;top:627.95px;font-size:26.4px;color:#323130;">Basic</span>
<div class="r " style="left:909.5px;top:626.0px;width:27.0px;height:27.0px;background:#fff;border:2px solid #323130;border-radius:50%;"></div>
<span class="t" style="letter-spacing:-0.273px;left:947.0px;top:627.95px;font-size:26.4px;color:#323130;">Advanced</span>
<span class="t" style="letter-spacing:0.926px;left:785.7px;top:711.25px;font-size:25.8px;color:#323130;-webkit-text-stroke:0.77px;">Group by</span>
<span class="t" style="left:907.0px;top:709.90px;font-size:27.5px;font-weight:700;color:#a80000;">*</span>
<div class="r " style="left:785.0px;top:745.0px;width:450.0px;height:56.0px;background:#fff;border:2px solid #979593;border-radius:5px;"></div>
<span class="t" style="letter-spacing:0.456px;left:799.3px;top:760.65px;font-size:28.0px;color:#323130;">accountid</span>
<svg class="r" style="left:1189.1px;top:763.0px;" width="29" height="17" viewBox="0 0 29 17" fill="none"><path d="M1.9 1.9 L14.3 13.9 L26.7 1.9" stroke="#323130" stroke-width="2.05"/></svg>
<span class="t" style="letter-spacing:1.047px;left:785.7px;top:846.25px;font-size:25.8px;color:#323130;-webkit-text-stroke:0.77px;">New column name</span>
<span class="t" style="left:1022.5px;top:844.90px;font-size:27.5px;font-weight:700;color:#a80000;">*</span>
<div class="r " style="left:785.0px;top:880.1px;width:450.0px;height:56.1px;background:#fff;border:2px solid #979593;border-radius:5px;"></div>
<span class="t" style="letter-spacing:-0.073px;left:799.3px;top:896.05px;font-size:28.2px;color:#323130;">numberOfServiceCalls</span>
<span class="t" style="letter-spacing:1.151px;left:1251.2px;top:846.25px;font-size:25.8px;color:#323130;-webkit-text-stroke:0.77px;">Operation</span>
<span class="t" style="left:1382.0px;top:844.90px;font-size:27.5px;font-weight:700;color:#a80000;">*</span>
<div class="r " style="left:1250.8px;top:880.1px;width:450.2px;height:56.1px;background:#fff;border:2px solid #979593;border-radius:5px;"></div>
<span class="t" style="letter-spacing:0.298px;left:1264.5px;top:896.05px;font-size:28.2px;color:#323130;">Count rows</span>
<svg class="r" style="left:1655.1px;top:898.1px;" width="29" height="17" viewBox="0 0 29 17" fill="none"><path d="M1.9 1.9 L14.3 13.9 L26.7 1.9" stroke="#323130" stroke-width="2.05"/></svg>
<span class="t" style="letter-spacing:0.981px;left:1717.2px;top:846.25px;font-size:25.8px;color:#a19f9d;-webkit-text-stroke:0.77px;">Column</span>
<span class="t" style="left:1819.5px;top:844.90px;font-size:27.5px;font-weight:700;color:#a80000;">*</span>
<div class="r " style="left:1716.8px;top:880.0px;width:450.2px;height:56.6px;background:#f3f2f1;border-radius:6px;"></div>
<svg class="r" style="left:2121.1px;top:898.1px;" width="29" height="17" viewBox="0 0 29 17" fill="none"><path d="M1.9 1.9 L14.3 13.9 L26.7 1.9" stroke="#a19f9d" stroke-width="2.05"/></svg>
<div class="r " style="left:785.0px;top:966.8px;width:27.0px;height:27.0px;background:#fff;border:2px solid #605e5c;border-radius:4.5px;"></div>
<span class="t" style="letter-spacing:0.196px;left:830.7px;top:968.05px;font-size:26.2px;color:#323130;">Use fuzzy grouping</span>
<svg class="r" style="left:787.0px;top:1037.0px;" width="18" height="22" viewBox="0 0 18 22" fill="none"><path d="M3.6 2.6 L12.4 11 L3.6 19.4" stroke="#323130" stroke-width="3"/></svg>
<span class="t" style="letter-spacing:0.982px;left:819.7px;top:1033.55px;font-size:30.2px;color:#323130;-webkit-text-stroke:1.09px;">Fuzzy group options</span>
<div class="r " style="left:1816.5px;top:1114.0px;width:134.5px;height:72.0px;background:#117865;border-radius:4px;"></div>
<span class="t" style="letter-spacing:-0.378px;left:1864.3px;top:1138.85px;font-size:27.6px;color:#fff;-webkit-text-stroke:0.94px;">OK</span>
<div class="r " style="left:1985.0px;top:1114.0px;width:182.0px;height:72.0px;background:#fff;border:2px solid #979593;border-radius:5px;"></div>
<span class="t" style="letter-spacing:0.078px;left:2032.7px;top:1138.85px;font-size:27.6px;color:#323130;-webkit-text-stroke:0.94px;">Cancel</span>
</body></html>
